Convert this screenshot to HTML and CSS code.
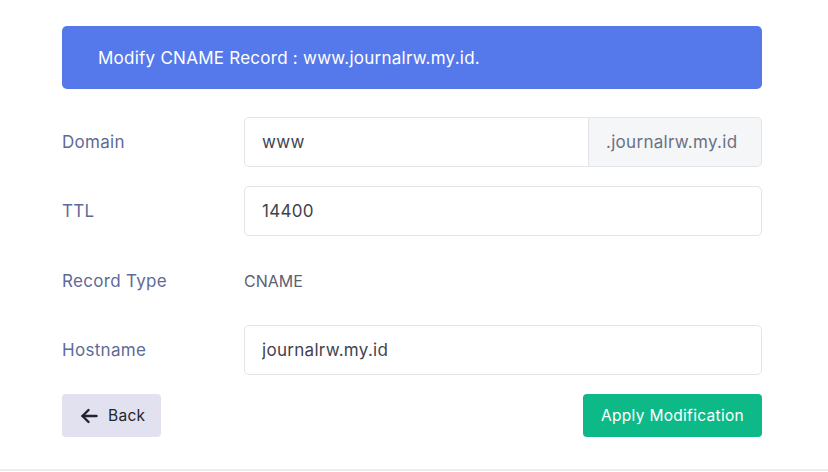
FILE: index.html
```html
<!DOCTYPE html>
<html lang="en">

<head>
  <meta charset="UTF-8">
  <meta name="viewport" content="width=device-width, initial-scale=1">
  <title>Modify CNAME Record</title>
  <link rel="stylesheet" href="styles.css">
</head>

<body>
  <main class="card">
    <div class="card__title">
      Modify CNAME Record : www.journalrw.my.id.
    </div>

    <form class="record-form">
      <div class="form__row">
        <label class="form__label" for="domain">Domain</label>
        <div class="input-group">
          <input type="text" id="domain" class="form__input" value="www">
          <span class="input-group__addon">.journalrw.my.id</span>
        </div>
      </div>
      <div class="form__row">
        <label class="form__label" for="ttl">TTL</label>
        <input type="text" id="ttl" class="form__input" value="14400">
      </div>
      <div class="form__row">
        <span class="form__label">Record Type</span>
        <span class="form__static">CNAME</span>
      </div>
      <div class="form__row">
        <label class="form__label" for="hostname">Hostname</label>
        <input type="text" id="hostname" class="form__input" value="journalrw.my.id">
      </div>

      <div class="form__actions">
        <a href="#" class="btn btn--light">
          <svg width="18" height="16" viewBox="0 0 18 16" fill="none" stroke="#1f2330" stroke-width="2.4" stroke-linecap="round" stroke-linejoin="round">
            <path d="M16.5 8H2.5" />
            <path d="M8.5 2L2.5 8l6 6" />
          </svg>
          Back
        </a>
        <button type="button" class="btn btn--success">Apply Modification</button>
      </div>
    </form>
  </main>
  <div class="footer-line"></div>
</body>

</html>
```

FILE: styles.css
```css
* {
  box-sizing: border-box;
  padding: 0;
  margin: 0;
}

body {
  font-family: Inter, "Noto Sans", sans-serif;
  background-color: #fff;
  color: #495057;
}

.card {
  width: 700px;
  margin-left: 62px;
  padding-top: 26px;
}

/* title bar */
.card__title {
  background-color: #5579eb;
  color: #fff;
  border-radius: 5px;
  height: 63px;
  padding: 0 36px;
  display: flex;
  align-items: center;
  font-size: 17px;
  letter-spacing: 0.25px;
}

.record-form {
  margin-top: 28px;
}

.form__row {
  display: flex;
  align-items: center;
  min-height: 50px;
  margin-bottom: 19.3px;
}

.form__label {
  width: 182px;
  flex-shrink: 0;
  font-size: 17px;
  color: #5d6b98;
  letter-spacing: 0.3px;
}

.form__static {
  font-size: 16px;
  color: #5b6173;
}

.form__input {
  flex: 1;
  height: 50px;
  border: 1px solid #e3e4ea;
  border-radius: 5px;
  padding: 0 17px;
  font-family: inherit;
  font-size: 17px;
  color: #3f4350;
  background-color: #fff;
  outline: none;
  letter-spacing: 0.3px;
}

.input-group {
  flex: 1;
  display: flex;
}

.input-group .form__input {
  border-radius: 5px 0 0 5px;
}

.input-group__addon {
  width: 173px;
  height: 50px;
  display: flex;
  align-items: center;
  padding: 0 17px;
  background-color: #f5f6f8;
  border: 1px solid #e3e4ea;
  border-left: 0;
  border-radius: 0 5px 5px 0;
  font-size: 17px;
  color: #6a7184;
  letter-spacing: 0.3px;
}

/* buttons */
.form__actions {
  display: flex;
  justify-content: space-between;
  align-items: center;
}

.btn {
  height: 43px;
  display: flex;
  align-items: center;
  border: 0;
  border-radius: 4px;
  font-family: inherit;
  font-size: 15.5px;
  text-decoration: none;
  cursor: pointer;
  letter-spacing: 0.3px;
}

.btn--light {
  width: 99px;
  padding-left: 18px;
  gap: 10px;
  background-color: #e2e1ef;
  color: #22252f;
}

.btn--success {
  width: 179px;
  justify-content: center;
  background-color: #0dba87;
  color: #fff;
}

.footer-line {
  margin-top: 32px;
  border-top: 2px solid #ececf2;
}
```
